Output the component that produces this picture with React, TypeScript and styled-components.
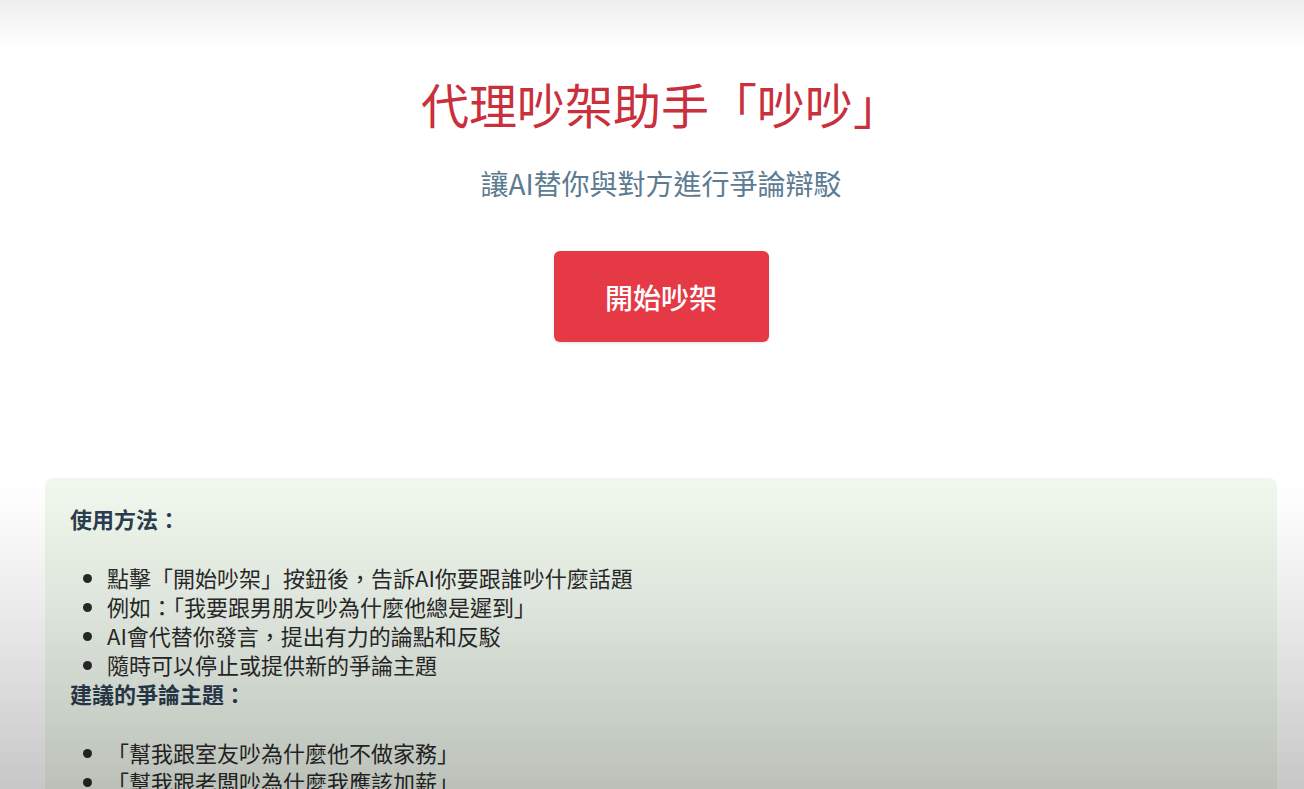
import React from "react";
import styled, { createGlobalStyle } from "styled-components";

const GlobalStyle = createGlobalStyle`
  html, body {
    margin: 0;
    padding: 0;
    background: #ffffff;
  }
  body {
    font-family: "Noto Sans CJK TC", "Noto Sans", sans-serif;
    color: #333;
  }
`;

const Page = styled.div`
  min-height: 789px;
  padding: 74px 27px 40px 45px;
  box-sizing: border-box;
  display: flex;
  flex-direction: column;
  align-items: center;
`;

// video-style vignette that sits over the whole shot
const Shade = styled.div`
  position: fixed;
  inset: 0;
  pointer-events: none;
  background:
    linear-gradient(to bottom, rgba(0, 0, 0, 0.065) 0px, rgba(0, 0, 0, 0) 48px),
    linear-gradient(
      to bottom,
      rgba(0, 0, 0, 0) 485px,
      rgba(0, 0, 0, 0.08) 610px,
      rgba(0, 0, 0, 0.22) 789px
    );
`;

const Title = styled.h1`
  margin: 0;
  font-size: 48px;
  line-height: 58px;
  font-weight: 400;
  color: #c9303c;
`;

const Subtitle = styled.p`
  margin: 32px 0 0;
  font-size: 28px;
  line-height: 39px;
  color: #5d7b91;
`;

const StartButton = styled.button`
  margin-top: 48px;
  width: 215px;
  height: 91px;
  border: none;
  border-radius: 6px;
  background: #e63946;
  color: #fff;
  font-family: inherit;
  font-size: 28px;
  font-weight: 500;
  cursor: pointer;
  box-shadow: 0 1px 3px rgba(0, 0, 0, 0.12);
`;

const Card = styled.section`
  align-self: stretch;
  margin-top: 136px;
  padding: 26px 25px 30px;
  background: #f0f8ee;
  border-radius: 8px;
  font-size: 22px;
  line-height: 29px;
`;

const Heading = styled.p`
  margin: 0 0 30px;
  font-weight: 700;
  color: #2c3e50;
`;

const List = styled.ul`
  margin: 0;
  padding-left: 37px;
  color: #2b2b2b;
`;

const Item = styled.li``;

const usage = [
  "點擊「開始吵架」按鈕後，告訴AI你要跟誰吵什麼話題",
  "例如：「我要跟男朋友吵為什麼他總是遲到」",
  "AI會代替你發言，提出有力的論點和反駁",
  "隨時可以停止或提供新的爭論主題",
];

const topics = [
  "「幫我跟室友吵為什麼他不做家務」",
  "「幫我跟老闆吵為什麼我應該加薪」",
  "「幫我跟朋友吵誰該付這頓飯錢」",
];

export default function App() {
  return (
    <>
      <GlobalStyle />
      <Page lang="zh-Hant-TW">
        <Title>代理吵架助手「吵吵」</Title>
        <Subtitle>讓AI替你與對方進行爭論辯駁</Subtitle>
        <StartButton>開始吵架</StartButton>
        <Card>
          <Heading>使用方法：</Heading>
          <List>
            {usage.map((t) => (
              <Item key={t}>{t}</Item>
            ))}
          </List>
          <Heading>建議的爭論主題：</Heading>
          <List>
            {topics.map((t) => (
              <Item key={t}>{t}</Item>
            ))}
          </List>
        </Card>
      </Page>
      <Shade />
    </>
  );
}
